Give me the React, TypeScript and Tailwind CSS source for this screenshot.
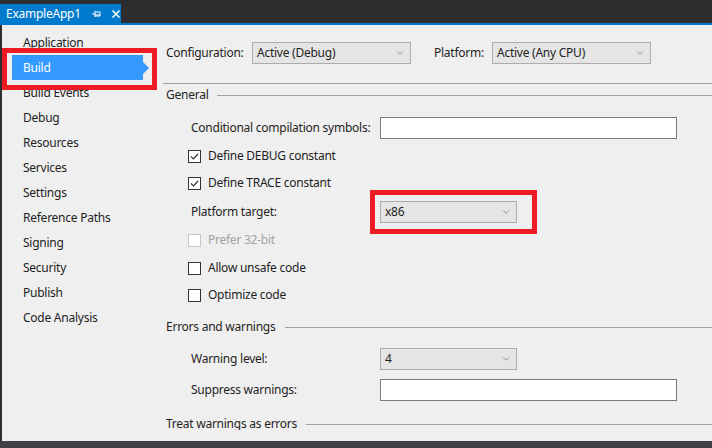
import { ChevronDown } from "lucide-react";

const navItems = [
  "Application",
  "Build",
  "Build Events",
  "Debug",
  "Resources",
  "Services",
  "Settings",
  "Reference Paths",
  "Signing",
  "Security",
  "Publish",
  "Code Analysis",
];

const Dropdown = ({ value, width }: { value: string; width: string }) => (
  <div className={`${width} h-[22px] flex items-center justify-between bg-[#e5e5e5] border border-[#acacac] pl-[4px] pr-[5px]`}>
    <span>{value}</span>
    <ChevronDown className="w-[10px] h-[10px] text-[#444]" strokeWidth={1.25} />
  </div>
);

const TextBox = () => <div className="w-[297px] h-[22px] bg-white border border-[#7a7a7a]" />;

const CheckBox = ({ label, checked, disabled }: { label: string; checked?: boolean; disabled?: boolean }) => (
  <div className="h-[22px] flex items-center pl-[25px]">
    <div
      className={`w-[13px] h-[13px] bg-white border flex items-center justify-center ${
        disabled ? "border-[#c6c6c6]" : "border-[#333]"
      }`}
    >
      {checked && (
        <svg viewBox="0 0 11 11" className="w-[11px] h-[11px]">
          <path d="M2 5.5 L4.5 8 L9 3" fill="none" stroke="#333" strokeWidth="1.2" />
        </svg>
      )}
    </div>
    <span className={`ml-[7px] ${disabled ? "text-[#a2a2a2]" : ""}`}>{label}</span>
  </div>
);

const GroupHeader = ({ title }: { title: string }) => (
  <div className="h-[22px] flex items-center pl-[3px]">
    <span>{title}</span>
    <div className="flex-1 h-px bg-[#a0a0a0] ml-[9px]" />
  </div>
);

const FieldRow = ({ label, children, className = "" }: { label: string; children: React.ReactNode; className?: string }) => (
  <div className={`h-[22px] flex items-center pl-[28px] ${className}`}>
    <span className="w-[189px]">{label}</span>
    {children}
  </div>
);

export default function App() {
  return (
    <div
      className="w-[712px] h-[448px] flex flex-col bg-[#2d2d30] text-[12px] tracking-[-0.25px] text-[#1e1e1e] overflow-hidden"
      style={{ fontFamily: '"Noto Sans", "Segoe UI", sans-serif' }}
    >
      {/* Tab strip */}
      <div className="h-[23px] flex items-end">
        <div className="h-[19px] w-[121px] bg-[#007acc] text-white flex items-center pl-[6px]">
          <span>ExampleApp1</span>
          <svg viewBox="0 0 10 10" className="w-[10px] h-[10px] ml-[11px]">
            <path d="M0 5 H3 M3 2 V8 M3 3 H8 V7 H3 M3 6 H8" fill="none" stroke="white" strokeWidth="1" />
          </svg>
          <svg viewBox="0 0 10 10" className="w-[10px] h-[10px] ml-[9px]">
            <path d="M1.5 1.5 L8.5 8.5 M8.5 1.5 L1.5 8.5" fill="none" stroke="white" strokeWidth="1.5" />
          </svg>
        </div>
      </div>
      <div className="h-[2px] bg-[#007acc]" />

      {/* Body */}
      <div className="h-[416px] flex">
        <div className="w-[2px] bg-[#2d2d30]" />
        <div className="flex-1 flex bg-[#efefef] relative">
          {/* Sidebar */}
          <div className="w-[161px] pt-[5px]">
            {navItems.map((item) =>
              item === "Build" ? (
                <div key={item} className="relative h-[25px] ml-[10px] w-[131px] bg-[#3399ff] text-white flex items-center pl-[11px]">
                  {item}
                  <div className="absolute right-[-6px] top-[7px] w-0 h-0 border-y-[6px] border-y-transparent border-l-[6px] border-l-[#3399ff]" />
                </div>
              ) : (
                <div key={item} className="h-[25px] flex items-center pl-[21px]">
                  {item}
                </div>
              )
            )}
          </div>

          {/* Main */}
          <div className="flex-1 flex flex-col">
            <div className="h-[22px] mt-[17px] flex items-center pl-[3px]">
              <span className="w-[86px]">Configuration:</span>
              <Dropdown value="Active (Debug)" width="w-[159px]" />
              <span className="ml-[23px] w-[58px]">Platform:</span>
              <Dropdown value="Active (Any CPU)" width="w-[159px]" />
            </div>
            <div className="h-px bg-[#a0a0a0] mt-[19px]" />

            <div className="h-[346px] overflow-hidden">
              <GroupHeader title="General" />
              <FieldRow label="Conditional compilation symbols:" className="mt-[11px]">
                <TextBox />
              </FieldRow>
              <div className="mt-[6px]">
                <CheckBox label="Define DEBUG constant" checked />
              </div>
              <div className="mt-[5px]">
                <CheckBox label="Define TRACE constant" checked />
              </div>
              <FieldRow label="Platform target:" className="mt-[7px]">
                <Dropdown value="x86" width="w-[137px]" />
              </FieldRow>
              <div className="mt-[6px]">
                <CheckBox label="Prefer 32-bit" disabled />
              </div>
              <div className="mt-[6px]">
                <CheckBox label="Allow unsafe code" />
              </div>
              <div className="mt-[5px]">
                <CheckBox label="Optimize code" />
              </div>
              <div className="mt-[10px]">
                <GroupHeader title="Errors and warnings" />
              </div>
              <FieldRow label="Warning level:" className="mt-[10px]">
                <Dropdown value="4" width="w-[137px]" />
              </FieldRow>
              <FieldRow label="Suppress warnings:" className="mt-[9px]">
                <TextBox />
              </FieldRow>
              <div className="mt-[12px]">
                <GroupHeader title="Treat warnings as errors" />
              </div>
            </div>
          </div>

          {/* Annotation boxes */}
          <div className="absolute left-0 top-[23px] w-[155px] h-[42px] border-[5px] border-[#ed1c24]" />
          <div className="absolute left-[368px] top-[165px] w-[167px] h-[44px] border-[5px] border-[#ed1c24]" />
        </div>
      </div>

      <div className="flex-1 bg-[#3f3f46]" />
    </div>
  );
}
